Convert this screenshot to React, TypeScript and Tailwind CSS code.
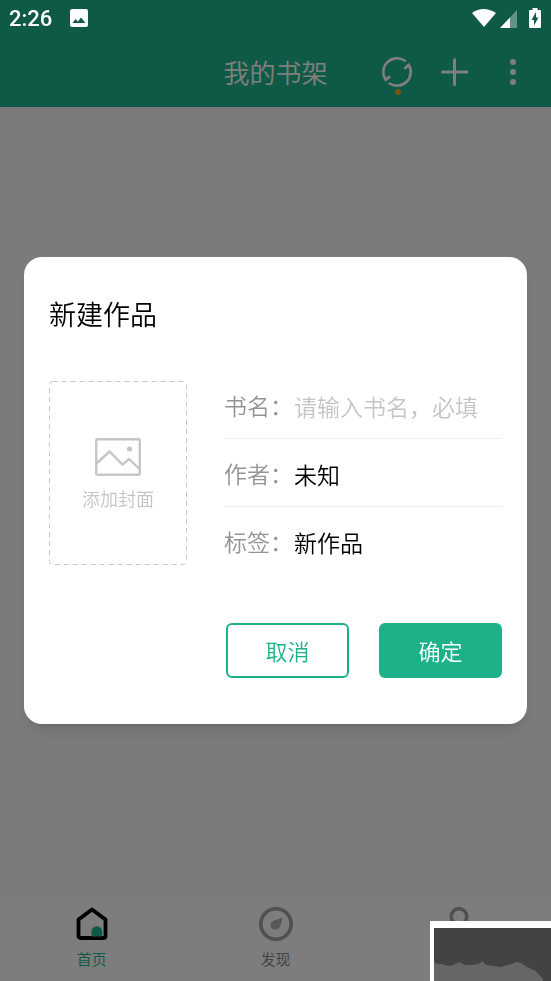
import { useState } from 'react';
import type { ReactNode } from 'react';

interface FieldProps {
  id: string;
  label: string;
  value: string;
  placeholder?: string;
  last?: boolean;
  onChange: (value: string) => void;
}

const Field = ({ id, label, value, placeholder, last, onChange }: FieldProps) => (
  <div className={`flex h-[68px] items-center border-b pt-[2px] ${last ? 'border-transparent' : 'border-[#eeeeee]'}`}>
    <label htmlFor={id} className="w-[70px] shrink-0 whitespace-nowrap text-[23px] text-[#949494]">
      {label}：
    </label>
    <input
      id={id}
      value={value}
      placeholder={placeholder}
      onChange={(e) => onChange(e.target.value)}
      className="h-10 min-w-0 flex-1 bg-transparent text-[23px] text-black outline-none placeholder:text-[#c4c4c4]"
    />
  </div>
);

interface TabProps {
  label: string;
  active?: boolean;
  children: ReactNode;
}

const Tab = ({ label, active, children }: TabProps) => (
  <a href="#" className={`flex flex-1 flex-col items-center gap-2 pt-3 text-[15px] leading-5 ${active ? 'text-[#1db18a]' : 'text-[#808080]'}`}>
    {children}
    {label}
  </a>
);

const StatusBar = () => (
  <div className="fixed inset-x-0 top-0 z-20 flex h-9 items-center justify-between pl-[9px] pr-[9px] text-white">
    <div className="flex items-center gap-[17px]">
      <span className="pt-[2px] font-[Roboto] text-[22px] font-medium leading-9">2:26</span>
      <svg width="20" height="20" viewBox="0 0 20 20">
        <rect x="1" y="1" width="18" height="18" rx="2" fill="#fff" />
        <path d="M3.500 15 6.500 11 9 13.500 12 9.500 16.500 15z" fill="#0f5946" />
      </svg>
    </div>
    <svg width="72" height="22" viewBox="0 0 72 22">
      <path d="M2 6Q13-2 26 6L14 20z" fill="#fff" />
      <path d="M47 3v18H30z" fill="#fff" opacity=".35" />
      <path d="M40 10.500V21H30z" fill="#fff" />
      <path d="M62.500 1h5v2h2.500q1 0 1 1v16q0 1-1 1H60q-1 0-1-1V4q0-1 1-1h2.500z" fill="#fff" />
      <path d="M66 5v5.500h2.500L64 18.500V13h-2.500z" fill="#0f5946" />
    </svg>
  </div>
);

const App = () => {
  const [title, setTitle] = useState('');
  const [author, setAuthor] = useState('未知');
  const [tag, setTag] = useState('新作品');

  return (
    <div className="flex min-h-screen flex-col bg-[#f7f7f7] font-['Noto_Sans_CJK_SC',sans-serif] font-[350]">
      <StatusBar />

      {/* Header */}
      <header className="grid grid-cols-[1fr_auto_1fr] items-center bg-[#1eb48e] pr-[9px] pt-9 text-white">
        <h1 className="col-start-2 pl-[9px] text-[26px] font-[350] leading-[71px]">我的书架</h1>
        <div className="flex justify-end">
          <button aria-label="同步" className="relative flex h-[58px] w-[58px] items-center justify-center">
            <svg width="32" height="32" viewBox="-16 -16 32 32" fill="none" stroke="currentColor" strokeWidth="2.6" strokeLinecap="round" strokeLinejoin="round">
              <path d="M7.800-11.300A13.750 13.750 0 0 0-11.200 8L-7.600 4.800" />
              <path d="M-7.400 11.500A13.750 13.750 0 0 0 11.700-7.300L8.100-3.800" />
            </svg>
            <span className="absolute bottom-[6px] left-[27px] h-[6px] w-[6px] rounded-full bg-[#f0ad20]" />
          </button>
          <button aria-label="添加" className="flex h-[58px] w-[58px] items-center justify-center">
            <svg width="28" height="28" viewBox="0 0 28 28" fill="none" stroke="currentColor" strokeWidth="3" strokeLinecap="round">
              <path d="M13.500 1.500v25M1.500 14h24.500" />
            </svg>
          </button>
          <button aria-label="更多" className="flex h-[58px] w-[58px] items-center justify-center">
            <svg width="8" height="28" viewBox="0 0 8 28" fill="currentColor">
              <circle cx="4" cy="4" r="3" />
              <circle cx="4" cy="14" r="3" />
              <circle cx="4" cy="24" r="3" />
            </svg>
          </button>
        </div>
      </header>

      <main className="flex-1" />

      {/* Bottom tabs */}
      <nav className="flex h-[86px] bg-[#fbfbfb]">
        <Tab label="首页" active>
          <svg width="34" height="34" viewBox="0 0 34 34">
            <path d="M3.500 12.500 17 2.500l13.500 10V29q0 2-2 2h-23q-2 0-2-2z" fill="none" stroke="#000" strokeWidth="3.800" strokeLinejoin="round" />
            <path d="M16.500 29.500V24.500a5.300 5.300 0 0 1 10.600 0v5z" fill="#1db18a" />
          </svg>
        </Tab>
        <Tab label="发现">
          <svg width="36" height="34" viewBox="0 0 36 34">
            <circle cx="18" cy="17" r="15.200" fill="none" stroke="#a0a0a0" strokeWidth="3.600" />
            <path d="M24.800 10.500 22.500 18.500Q21 22.500 17 22.700q-5-.6-4.500-5.400.5-2.500 3.500-3.800z" fill="#b0b0b0" />
          </svg>
        </Tab>
        <Tab label="我的">
          <svg width="36" height="34" viewBox="0 0 36 34" fill="none" stroke="#a0a0a0" strokeWidth="3.600">
            <circle cx="18" cy="9.500" r="7.800" />
            <path d="M4 32c0-9 6-14.500 14-14.500S32 23 32 32z" strokeLinejoin="round" />
          </svg>
        </Tab>
      </nav>

      {/* Dialog */}
      <div className="fixed inset-0 z-10 flex items-center justify-center bg-black/50 px-6">
        <form
          role="dialog"
          aria-labelledby="dialog-title"
          onSubmit={(e) => e.preventDefault()}
          className="w-full rounded-[18px] bg-white px-[25px] pb-[46px] pt-[37px] shadow-lg"
        >
          <h2 id="dialog-title" className="text-[27px] font-[350] leading-10 text-black">新建作品</h2>

          <div className="mt-[37px] flex justify-between gap-9">
            <button type="button" className="relative mt-[10px] flex h-[184px] w-[138px] shrink-0 flex-col items-center justify-center gap-2 pt-[3px] text-[18px] leading-7 text-[#c4c4c4]">
              <svg className="absolute inset-0 h-full w-full overflow-visible" fill="none">
                <rect x="0.500" y="0.500" width="137" height="183" rx="3" stroke="#c8c8c8" strokeDasharray="5 4" />
              </svg>
              <svg width="46" height="38" viewBox="0 0 46 38" fill="none" stroke="#c6c6c6" strokeWidth="2.400">
                <rect x="1.200" y="1.200" width="43.600" height="35.600" rx="1.500" />
                <path d="M1.500 25.500 14.500 13.500 27.500 26.500 34 21 44.500 31" />
                <circle cx="34.500" cy="11" r="2.600" fill="#c6c6c6" stroke="none" />
              </svg>
              添加封面
            </button>
            <div className="max-w-[278px] flex-1">
              <Field id="title" label="书名" value={title} placeholder="请输入书名，必填" onChange={setTitle} />
              <Field id="author" label="作者" value={author} onChange={setAuthor} />
              <Field id="tag" label="标签" value={tag} onChange={setTag} last />
            </div>
          </div>

          <div className="mt-12 flex justify-end gap-[30px] text-[22px]">
            <button type="button" className="h-[55px] w-[123px] rounded-md border-2 border-[#1db18a] text-[#1db18a]">
              取消
            </button>
            <button type="submit" className="h-[55px] w-[123px] rounded-md bg-[#1db18a] text-white">
              确定
            </button>
          </div>
        </form>
      </div>

      {/* Floating preview */}
      <div className="fixed bottom-0 right-0 z-20 h-[60px] w-[121px] border-l-4 border-t-[7px] border-white bg-[#434343]">
        <svg width="117" height="53" viewBox="0 0 117 53" className="block">
          <path d="M0 34 4 36 8 36 14 38 19 37 25 34 31 37 38 37 45 36 48 33 52 37 60 38 67 39 73 37 78 36 82 34 87 35 93 39 102 43 105 47 109 51V53H0z" fill="#666666" />
        </svg>
      </div>
    </div>
  );
};

export default App;
